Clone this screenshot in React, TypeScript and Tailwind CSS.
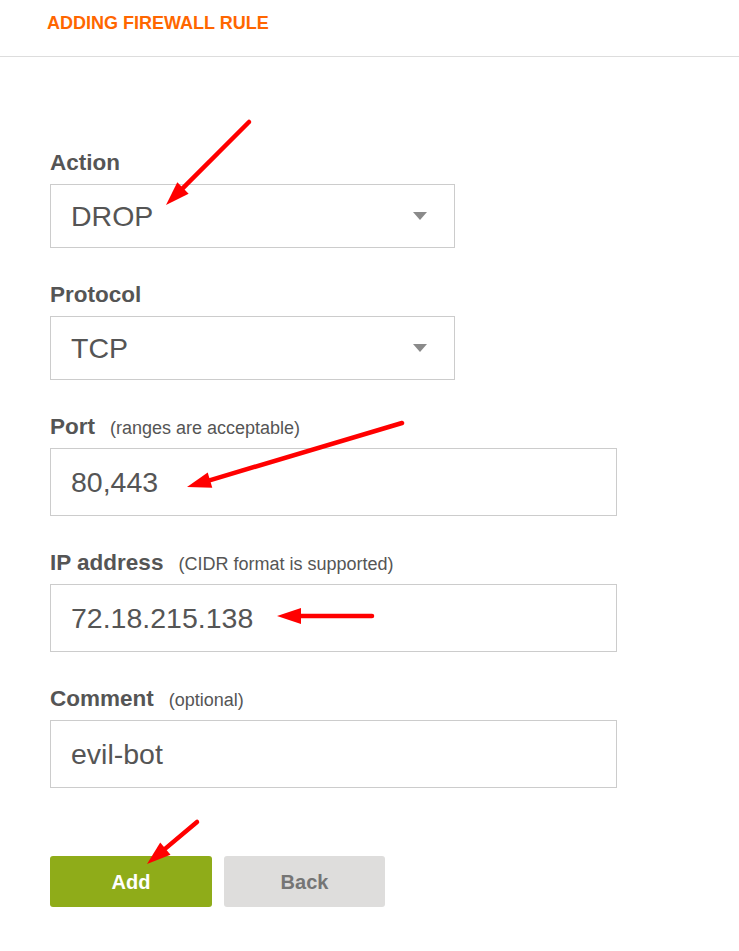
import React from "react";

type Arrow = { x1: number; y1: number; x2: number; y2: number };

const arrows: Arrow[] = [
  { x1: 249, y1: 122, x2: 166, y2: 205 },
  { x1: 402, y1: 423, x2: 187, y2: 487 },
  { x1: 372, y1: 616, x2: 277, y2: 616 },
  { x1: 197, y1: 822, x2: 147, y2: 864 },
];

function ArrowShape({ x1, y1, x2, y2 }: Arrow) {
  const dx = x2 - x1;
  const dy = y2 - y1;
  const len = Math.hypot(dx, dy);
  const ux = dx / len;
  const uy = dy / len;
  const headLen = 24;
  const headHalf = 8;
  const bx = x2 - ux * headLen;
  const by = y2 - uy * headLen;
  const pts = [
    `${x2},${y2}`,
    `${bx - uy * headHalf},${by + ux * headHalf}`,
    `${bx + uy * headHalf},${by - ux * headHalf}`,
  ].join(" ");
  return (
    <g>
      <line x1={x1} y1={y1} x2={bx + ux * 4} y2={by + uy * 4} stroke="#ff0000" strokeWidth={4.5} strokeLinecap="round" />
      <polygon points={pts} fill="#ff0000" />
    </g>
  );
}

function Caret() {
  return (
    <svg width="14" height="8" viewBox="0 0 14 8" className="shrink-0">
      <polygon points="0,0 14,0 7,8" fill="#8a8a8a" />
    </svg>
  );
}

function Label({ title, hint }: { title: string; hint?: string }) {
  return (
    <div className="mb-2 flex h-[26px] items-baseline leading-[26px]">
      <span className="text-[22.5px] font-bold text-[#555555]">{title}</span>
      {hint && <span className="ml-[15px] text-[18px] leading-[20px] text-[#555555]">{hint}</span>}
    </div>
  );
}

function SelectBox({ value }: { value: string }) {
  return (
    <div className="flex h-[64px] w-[405px] items-center justify-between border border-[#cccccc] pl-[20px] pr-[27px]">
      <span className="text-[28.5px] text-[#555555]">{value}</span>
      <Caret />
    </div>
  );
}

function TextBox({ value }: { value: string }) {
  return (
    <div className="flex h-[68px] w-[567px] items-center border border-[#cccccc] pl-[20px]">
      <span className="text-[28.5px] text-[#555555]">{value}</span>
    </div>
  );
}

export default function App() {
  return (
    <div className="relative min-h-[951px] bg-white font-['Liberation_Sans',Arial,sans-serif]">
      <header className="h-[57px] border-b border-[#dddddd] px-[47px] pt-[12px]">
        <h1 className="text-[18px] font-bold leading-[22px] text-[#ff6600]">ADDING FIREWALL RULE</h1>
      </header>

      <main className="px-[50px] pt-[93px]">
        <div className="flex flex-col gap-[34px]">
          <div>
            <Label title="Action" />
            <SelectBox value="DROP" />
          </div>
          <div>
            <Label title="Protocol" />
            <SelectBox value="TCP" />
          </div>
          <div>
            <Label title="Port" hint="(ranges are acceptable)" />
            <TextBox value="80,443" />
          </div>
          <div>
            <Label title="IP address" hint="(CIDR format is supported)" />
            <TextBox value="72.18.215.138" />
          </div>
          <div>
            <Label title="Comment" hint="(optional)" />
            <TextBox value="evil-bot" />
          </div>
        </div>

        <div className="mt-[68px] flex gap-[12px]">
          <button className="h-[51px] w-[162px] rounded-[3px] bg-[#8fac19] text-[20px] font-bold text-white">
            Add
          </button>
          <button className="h-[51px] w-[161px] rounded-[3px] bg-[#dedddc] text-[20px] font-bold text-[#757575]">
            Back
          </button>
        </div>
      </main>

      <svg className="pointer-events-none absolute left-0 top-0" width="739" height="951">
        {arrows.map((a, i) => (
          <ArrowShape key={i} {...a} />
        ))}
      </svg>
    </div>
  );
}
